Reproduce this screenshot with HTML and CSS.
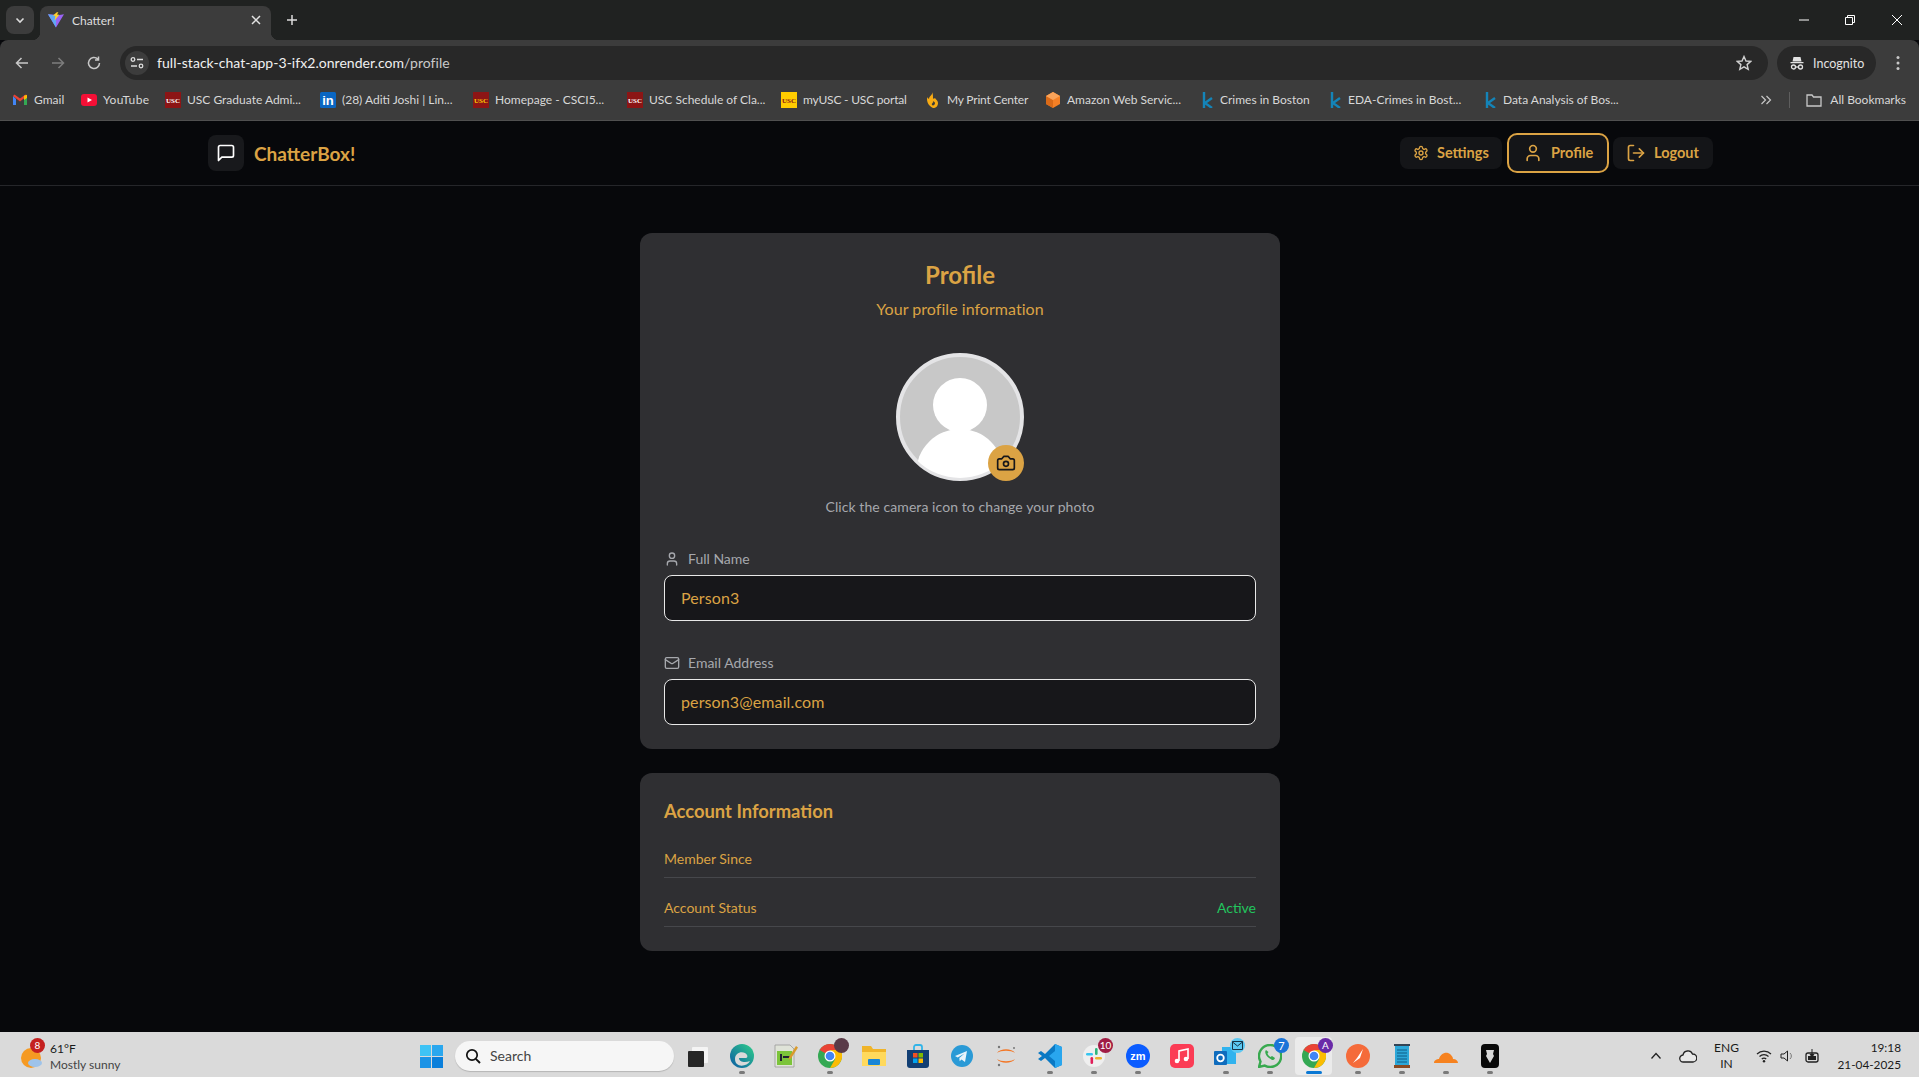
FILE: index.html
```html
<!DOCTYPE html>
<html lang="en">
<head>
<meta charset="utf-8">
<title>Chatter!</title>
<link rel="stylesheet" href="styles.css">
</head>
<body>
<header class="chrome">
  <div class="tabstrip">
    <button class="tab-list"><svg width="12" height="12" viewBox="0 0 12 12"><path d="M2.500 4.500 6 8l3.500-3.500" fill="none" stroke="#dcdcdc" stroke-width="1.600"/></svg></button>
    <div class="tab">
      <svg class="favicon" width="16" height="16" viewBox="0 0 16 16"><path d="M0 2.200 8 15.500 16 2.200 10 3.200 8 2.800z" fill="#9a63f5"/><path d="M0 2.200 8 3.600 8 15.500z" fill="#5fa8f5"/><path d="M8.800.3 5 3.500 7.400 4 6.600 8.600 11.300 2.800 9 2.600 10.400.3z" fill="#ffd02a"/></svg>
      <span class="tab-title">Chatter!</span>
      <svg class="tab-x" width="10" height="10" viewBox="0 0 10 10"><path d="M1 1l8 8M9 1 1 9" stroke="#e2e2e2" stroke-width="1.500"/></svg>
    </div>
    <svg class="tab-new" width="12" height="12" viewBox="0 0 12 12"><path d="M6 1v10M1 6h10" stroke="#dcdcdc" stroke-width="1.500"/></svg>
    <div class="win-ctrls">
      <svg width="10" height="10" viewBox="0 0 10 10"><path d="M0 5h10" stroke="#fff" stroke-width="1"/></svg>
      <svg width="10" height="10" viewBox="0 0 10 10"><path d="M.5 2.500h7v7h-7zM2.500 2.500v-2h7v7h-2" fill="none" stroke="#fff"/></svg>
      <svg width="12" height="12" viewBox="0 0 12 12"><path d="M1 1l10 10M11 1 1 11" stroke="#fff" stroke-width="1"/></svg>
    </div>
  </div>
  <div class="toolbar">
    <svg class="tb-ico" width="16" height="16" viewBox="0 0 16 16"><path d="M14 8H3M7.500 3 2.500 8l5 5" fill="none" stroke="#c8c8c8" stroke-width="1.500"/></svg>
    <svg class="tb-ico" width="16" height="16" viewBox="0 0 16 16"><path d="M2 8h11M8.500 3l5 5-5 5" fill="none" stroke="#7d7d7d" stroke-width="1.500"/></svg>
    <svg class="tb-ico" width="16" height="16" viewBox="0 0 16 16"><path d="M13.500 8A5.500 5.500 0 1 1 11.800 4M12.500 1.500V5H9" fill="none" stroke="#c8c8c8" stroke-width="1.500"/></svg>
    <div class="omnibox">
      <span class="site-btn"><svg width="16" height="16" viewBox="0 0 16 16"><g fill="none" stroke="#dcdcdc" stroke-width="1.300"><circle cx="4" cy="4.500" r="1.800"/><path d="M8 4.500h6M2 11h6"/><circle cx="12" cy="11" r="1.800"/></g></svg></span>
      <span class="url">full-stack-chat-app-3-ifx2.onrender.com<span class="url-path">/profile</span></span>
      <svg class="star" width="16" height="16" viewBox="0 0 16 16"><path d="M8 1.500 10 6l4.800.4-3.700 3.200 1.100 4.700L8 11.800l-4.200 2.500 1.100-4.700L1.200 6.400 6 6z" fill="none" stroke="#d0d0d0" stroke-width="1.400"/></svg>
    </div>
    <div class="incognito">
      <svg width="16" height="16" viewBox="0 0 16 16"><g fill="#e2e2e2"><path d="M4.500 2h7l1 4.500h-9zM1.500 7h13v1.300h-13z"/></g><g fill="none" stroke="#e2e2e2" stroke-width="1.300"><circle cx="4.500" cy="12" r="2"/><circle cx="11.500" cy="12" r="2"/><path d="M6.500 12h3"/></g></svg>
      <span>Incognito</span>
    </div>
    <svg class="kebab" width="4" height="16" viewBox="0 0 4 16"><g fill="#c8c8c8"><circle cx="2" cy="2.500" r="1.500"/><circle cx="2" cy="8" r="1.500"/><circle cx="2" cy="13.500" r="1.500"/></g></svg>
  </div>
  <nav class="bookmarks">
    <a class="bm bm-gmail"><svg width="16" height="16" viewBox="0 0 16 16"><path d="M1 4v9h3V7z" fill="#4285f4"/><path d="M15 4v9h-3V7z" fill="#34a853"/><path d="M1 4l7 5.500L15 4l-1.500-1.500L8 6.500 2.500 2.500z" fill="#ea4335"/><path d="M12 3.800 15 2.800V6l-3 2z" fill="#fbbc04"/></svg><span>Gmail</span></a>
    <a class="bm bm-yt"><svg width="16" height="16" viewBox="0 0 16 16"><rect y="2" width="16" height="12" rx="3" fill="#f50f36"/><path d="M6.500 5.500v5L11 8z" fill="#fff"/></svg><span>YouTube</span></a>
    <a class="bm bm-a"><svg width="16" height="16" viewBox="0 0 16 16"><rect width="16" height="16" fill="#8c1515"/><text class="fav-txt fav-w" x="8" y="11">USC</text></svg><span>USC Graduate Admi...</span></a>
    <a class="bm bm-in"><svg width="16" height="16" viewBox="0 0 16 16"><rect width="16" height="16" rx="1.500" fill="#0a66c2"/><text class="fav-in" x="8" y="13">in</text></svg><span>(28) Aditi Joshi | Lin...</span></a>
    <a class="bm bm-b"><svg width="16" height="16" viewBox="0 0 16 16"><rect width="16" height="16" fill="#8c1515"/><text class="fav-txt fav-y" x="8" y="11">USC</text></svg><span>Homepage - CSCI5...</span></a>
    <a class="bm bm-c"><svg width="16" height="16" viewBox="0 0 16 16"><rect width="16" height="16" fill="#8c1515"/><text class="fav-txt fav-w" x="8" y="11">USC</text></svg><span>USC Schedule of Cla...</span></a>
    <a class="bm bm-d"><svg width="16" height="16" viewBox="0 0 16 16"><rect width="16" height="16" fill="#ffcc00"/><text class="fav-txt fav-r" x="8" y="11">USC</text></svg><span>myUSC - USC portal</span></a>
    <a class="bm bm-e"><svg width="16" height="16" viewBox="0 0 16 16"><path d="M7 0c1 3-3 4-3 7-1-.5-1.500-1.500-1.500-2C1 8 3 14 8 16c3 0 5-2 5-5 0-2.500-2-3-3-5C9 7 8 7 8 6c0-2 0-4-1-6z" fill="#f7ab14"/><path d="M8 9c1 2-2 2-1 4 1 1 3 0 3-2 0-1-1-1-2-2z" fill="#3c3c3c"/></svg><span>My Print Center</span></a>
    <a class="bm bm-f"><svg width="16" height="16" viewBox="0 0 16 16"><path d="M8 0l7 4v8l-7 4-7-4V4z" fill="#f58025"/><path d="M8 8v8l-7-4V4z" fill="#d96a18"/><path d="M8 8 1 4l7-4 7 4z" fill="#f9a35a"/></svg><span>Amazon Web Servic...</span></a>
    <a class="bm bm-g"><svg width="12" height="16" viewBox="0 0 12 16"><path d="M2 0v16M10 6 3 11l7 5" fill="none" stroke="#1484b8" stroke-width="2.400"/></svg><span>Crimes in Boston</span></a>
    <a class="bm bm-h"><svg width="12" height="16" viewBox="0 0 12 16"><path d="M2 0v16M10 6 3 11l7 5" fill="none" stroke="#1484b8" stroke-width="2.400"/></svg><span>EDA-Crimes in Bost...</span></a>
    <a class="bm bm-i"><svg width="12" height="16" viewBox="0 0 12 16"><path d="M2 0v16M10 6 3 11l7 5" fill="none" stroke="#1484b8" stroke-width="2.400"/></svg><span>Data Analysis of Bos...</span></a>
    <div class="bm-end">
      <svg width="12" height="12" viewBox="0 0 12 12"><path d="M1.500 2 5.500 6l-4 4M6.500 2l4 4-4 4" fill="none" stroke="#c8c8c8" stroke-width="1.200"/></svg>
      <i class="bm-sep"></i>
      <a class="bm-all"><svg width="16" height="16" viewBox="0 0 16 16"><path d="M1 3h5l1.500 2H15v9H1z" fill="none" stroke="#c8c8c8" stroke-width="1.300"/></svg><span>All Bookmarks</span></a>
    </div>
  </nav>
</header>

<main class="app">
  <div class="app-nav">
    <div class="brand">
      <span class="brand-box"><svg class="lu lu-20" viewBox="0 0 24 24"><path d="M21 15a2 2 0 0 1-2 2H7l-4 4V5a2 2 0 0 1 2-2h14a2 2 0 0 1 2 2z"/></svg></span>
      <span class="brand-name">ChatterBox!</span>
    </div>
    <div class="nav-btns">
      <a class="nav-btn"><svg class="lu lu-16" viewBox="0 0 24 24"><path d="M12.220 2h-.44a2 2 0 0 0-2 2v.18a2 2 0 0 1-1 1.730l-.43.25a2 2 0 0 1-2 0l-.15-.08a2 2 0 0 0-2.730.73l-.22.38a2 2 0 0 0 .73 2.730l.15.1a2 2 0 0 1 1 1.720v.51a2 2 0 0 1-1 1.740l-.15.09a2 2 0 0 0-.73 2.730l.22.38a2 2 0 0 0 2.730.73l.15-.08a2 2 0 0 1 2 0l.43.25a2 2 0 0 1 1 1.730V20a2 2 0 0 0 2 2h.44a2 2 0 0 0 2-2v-.18a2 2 0 0 1 1-1.730l.43-.25a2 2 0 0 1 2 0l.15.08a2 2 0 0 0 2.730-.73l.22-.39a2 2 0 0 0-.73-2.730l-.15-.08a2 2 0 0 1-1-1.740v-.5a2 2 0 0 1 1-1.740l.15-.09a2 2 0 0 0 .73-2.730l-.22-.38a2 2 0 0 0-2.730-.73l-.15.08a2 2 0 0 1-2 0l-.43-.25a2 2 0 0 1-1-1.730V4a2 2 0 0 0-2-2z"/><circle cx="12" cy="12" r="3"/></svg><span>Settings</span></a>
      <a class="nav-btn nav-btn-on"><svg class="lu lu-20" viewBox="0 0 24 24"><path d="M19 21v-2a4 4 0 0 0-4-4H9a4 4 0 0 0-4 4v2"/><circle cx="12" cy="7" r="4"/></svg><span>Profile</span></a>
      <a class="nav-btn"><svg class="lu lu-20" viewBox="0 0 24 24"><path d="M9 21H5a2 2 0 0 1-2-2V5a2 2 0 0 1 2-2h4"/><polyline points="16 17 21 12 16 7"/><line x1="21" y1="12" x2="9" y2="12"/></svg><span>Logout</span></a>
    </div>
  </div>

  <div class="content">
    <section class="card card-profile">
      <div class="head">
        <h1>Profile</h1>
        <p>Your profile information</p>
      </div>
      <div class="avatar-wrap">
        <div class="avatar">
          <svg viewBox="0 0 128 128" width="128" height="128"><defs><clipPath id="av"><circle cx="64" cy="64" r="61"/></clipPath></defs><circle cx="64" cy="64" r="62" fill="#c8c8c8" stroke="#e4e4e6" stroke-width="4"/><g clip-path="url(#av)" fill="#fff"><ellipse cx="64" cy="52" rx="27" ry="27"/><circle cx="64" cy="120" r="44"/></g></svg>
          <span class="cam"><svg class="lu lu-20 lu-dark" viewBox="0 0 24 24"><path d="M14.500 4h-5L7 7H4a2 2 0 0 0-2 2v9a2 2 0 0 0 2 2h16a2 2 0 0 0 2-2V9a2 2 0 0 0-2-2h-3l-2.500-3z"/><circle cx="12" cy="13" r="3"/></svg></span>
        </div>
        <p class="hint">Click the camera icon to change your photo</p>
      </div>
      <div class="fields">
        <div class="field">
          <label><svg class="lu lu-16 lu-grey" viewBox="0 0 24 24"><path d="M19 21v-2a4 4 0 0 0-4-4H9a4 4 0 0 0-4 4v2"/><circle cx="12" cy="7" r="4"/></svg>Full Name</label>
          <div class="value">Person3</div>
        </div>
        <div class="field">
          <label><svg class="lu lu-16 lu-grey" viewBox="0 0 24 24"><rect x="2" y="4" width="20" height="16" rx="2"/><path d="M22 7l-8.970 5.700a1.940 1.940 0 0 1-2.060 0L2 7"/></svg>Email Address</label>
          <div class="value">person3@email.com</div>
        </div>
      </div>
    </section>

    <section class="card card-account">
      <h2>Account Information</h2>
      <div class="rows">
        <div class="row"><span>Member Since</span><span></span></div>
        <div class="row"><span>Account Status</span><span class="active">Active</span></div>
      </div>
    </section>
  </div>
</main>

<footer class="taskbar">
  <div class="weather">
    <span class="w-ico"><svg width="24" height="28" viewBox="0 0 24 28"><circle cx="11" cy="16" r="10" fill="#f59a23"/><ellipse cx="15" cy="21" rx="7" ry="4" fill="#9ec3ea"/></svg><b class="w-badge">8</b></span>
    <div class="w-txt"><span class="w-temp">61°F</span><span class="w-desc">Mostly sunny</span></div>
  </div>
  <div class="tb-center">
    <svg class="start" width="23" height="23" viewBox="0 0 23 23"><rect width="11" height="11" fill="#3ec3f5"/><rect x="12" width="11" height="11" fill="#2aa7ee"/><rect y="12" width="11" height="11" fill="#1b93e6"/><rect x="12" y="12" width="11" height="11" fill="#0a7fdb"/></svg>
    <div class="search"><svg width="16" height="16" viewBox="0 0 16 16"><circle cx="7" cy="7" r="5.200" fill="none" stroke="#111" stroke-width="1.700"/><path d="M10.800 10.800 15 15" stroke="#111" stroke-width="1.900"/></svg><span>Search</span></div>
    <div class="apps">
      <span class="app-i"><svg viewBox="0 0 24 24"><rect x="6" y="3" width="16" height="16" rx="1" fill="#f4f4f4"/><rect x="2" y="7" width="16" height="16" rx="1" fill="#262626"/></svg></span>
      <span class="app-i dot"><svg viewBox="0 0 24 24"><defs><linearGradient id="ed" x1="0" y1="1" x2="1" y2="0"><stop offset="0" stop-color="#0c59a4"/><stop offset="1" stop-color="#2fd08a"/></linearGradient></defs><circle cx="12" cy="12" r="12" fill="url(#ed)"/><path d="M5 15c0-6 6-8 10-6 3 1.500 3 5 1 5h-7c0 4 6 5 11 3-3 6-15 7-15-2z" fill="#d9d9d9"/></svg></span>
      <span class="app-i"><svg viewBox="0 0 24 24"><path d="M1 1h15l4 4v18H1z" fill="#dfe3d8" stroke="#999" stroke-width=".8"/><rect x="3" y="7" width="15" height="14" fill="#7cc43a"/><rect x="6" y="10" width="2" height="7" fill="#223"/><rect x="9" y="12" width="7" height="2" fill="#223"/><path d="M15 13 22 2l2 1.500-7 11-2.500 1z" fill="#d99a2b"/></svg></span>
      <span class="app-i dot"><svg viewBox="0 0 24 24"><circle cx="12" cy="12" r="12" fill="#34a853"/><path d="M12 12 1.600 6A12 12 0 0 1 22.400 6H12z" fill="#ea4335"/><path d="M12 24A12 12 0 0 0 22.400 6H12l5.200 9z" fill="#fbbc04"/><circle cx="12" cy="12" r="5.500" fill="#fff"/><circle cx="12" cy="12" r="4.300" fill="#4285f4"/></svg><b class="pic"></b></span>
      <span class="app-i"><svg viewBox="0 0 24 24"><path d="M0 2h9l2 3h13v17H0z" fill="#f0b429"/><path d="M0 8h24v14H0z" fill="#ffd95c"/><rect x="6" y="15" width="12" height="6" rx="1" fill="#1a86d6"/></svg></span>
      <span class="app-i"><svg viewBox="0 0 24 24"><path d="M8 6V3a2 2 0 0 1 2-2h4a2 2 0 0 1 2 2v3" fill="none" stroke="#32b4e8" stroke-width="1.800"/><path d="M1 6h22v15a3 3 0 0 1-3 3H4a3 3 0 0 1-3-3z" fill="#123f74"/><rect x="7" y="9" width="4.500" height="4.500" fill="#f25022"/><rect x="12.500" y="9" width="4.500" height="4.500" fill="#7fba00"/><rect x="7" y="14.500" width="4.500" height="4.500" fill="#00a4ef"/><rect x="12.500" y="14.500" width="4.500" height="4.500" fill="#ffb900"/></svg></span>
      <span class="app-i"><svg viewBox="0 0 24 24"><circle cx="12" cy="12" r="11" fill="#2a9ad6"/><path d="M5 12l12-5-2 11-3.500-2.500-1.800 1.800-.4-3.300 5.200-4.500-6.800 4z" fill="#e8f4fb"/></svg></span>
      <span class="app-i"><svg viewBox="0 0 24 24"><path d="M3 9c3-5 15-5 18 0-4-3-14-3-18 0zM3 15c3 5 15 5 18 0-4 3-14 3-18 0z" fill="#f37726"/><circle cx="5" cy="3" r="1.200" fill="#777"/><circle cx="20" cy="4" r="1" fill="#777"/><circle cx="5" cy="21" r="1.200" fill="#777"/></svg></span>
      <span class="app-i dot"><svg viewBox="0 0 24 24"><path d="M17 0 7 10 3 7 0 9l4 3-4 3 3 2 4-3 10 10 7-3V3z" fill="#0a79c4"/><path d="M17 0l7 3v18l-7 3V7l-6 5 6 5z" fill="#29a6ee"/></svg></span>
      <span class="app-i dot"><svg viewBox="0 0 24 24"><circle cx="12" cy="12" r="11" fill="#efefef"/><rect x="4" y="9" width="7" height="2.600" rx="1.300" fill="#36c5f0"/><rect x="13" y="4" width="2.600" height="7" rx="1.300" fill="#2eb67d"/><rect x="13" y="13" width="7" height="2.600" rx="1.300" fill="#ecb22e"/><rect x="8.500" y="13" width="2.600" height="7" rx="1.300" fill="#e01e5a"/></svg><b class="cnt cnt-red">10</b></span>
      <span class="app-i dot"><svg viewBox="0 0 24 24"><circle cx="12" cy="12" r="12" fill="#0b5cff"/><text class="zm" x="12" y="16">zm</text></svg></span>
      <span class="app-i"><svg viewBox="0 0 24 24"><rect width="24" height="24" rx="5" fill="#fb3c55"/><path d="M9 17V7l9-2v10" fill="none" stroke="#fff" stroke-width="1.600"/><circle cx="7" cy="17" r="2.300" fill="#fff"/><circle cx="16" cy="15" r="2.300" fill="#fff"/></svg></span>
      <span class="app-i dot"><svg viewBox="0 0 24 24"><path d="M8 3h14v17H8z" fill="#31b3ee"/><rect x="0" y="7" width="13" height="14" rx="1" fill="#0f6cbd"/><circle cx="6.500" cy="14" r="3.300" fill="none" stroke="#fff" stroke-width="1.800"/></svg><b class="cnt cnt-mail"><svg width="11" height="9" viewBox="0 0 11 9"><path d="M.5.500h10v8H.5zM.5 1l5 4 5-4" fill="none" stroke="#123" stroke-width=".9"/></svg></b></span>
      <span class="app-i dot"><svg viewBox="0 0 24 24"><path d="M12 1a11 11 0 0 0-9.500 16.500L1 23l5.700-1.500A11 11 0 1 0 12 1z" fill="none" stroke="#38a94f" stroke-width="2.400"/><path d="M8 6c-2 2 0 6 3 8s5 3 6 0l-3-2-1.500 1C11 12 10 11 9.500 9.500l1-1.500z" fill="#38a94f"/></svg><b class="cnt cnt-blue">7</b></span>
      <span class="app-i dot active-app"><svg viewBox="0 0 24 24"><circle cx="12" cy="12" r="12" fill="#34a853"/><path d="M12 12 1.600 6A12 12 0 0 1 22.400 6H12z" fill="#ea4335"/><path d="M12 24A12 12 0 0 0 22.400 6H12l5.200 9z" fill="#fbbc04"/><circle cx="12" cy="12" r="5.500" fill="#fff"/><circle cx="12" cy="12" r="4.300" fill="#4285f4"/></svg><b class="cnt cnt-purple">A</b></span>
      <span class="app-i dot"><svg viewBox="0 0 24 24"><circle cx="12" cy="12" r="12" fill="#f56b3a"/><path d="M7 19l4-5 6-9-3 9z" fill="#fff"/></svg></span>
      <span class="app-i dot"><svg viewBox="0 0 24 24"><rect x="5" y="2" width="14" height="19" fill="#2ca7d8"/><path d="M7 6h10M7 9h10M7 12h10M7 15h10M7 18h10" stroke="#0e5d86" stroke-width="1"/><rect x="4" y="0" width="16" height="2" fill="#345"/><rect x="4" y="21" width="16" height="3" fill="#8a4a22"/></svg></span>
      <span class="app-i dot"><svg viewBox="0 0 24 24"><path d="M0 19c0-3 3-4 5-4 1-4 5-7 9-6 3 1 5 4 5 6 3 0 5 2 5 4z" fill="#f6821f"/></svg></span>
      <span class="app-i dot"><svg viewBox="0 0 24 24"><rect x="3" y="0" width="18" height="24" rx="4" fill="#0a0a0a"/><path d="M8 6h8l-1 4 1 2-4 7-4-7 1-2z" fill="#d9d9d9"/></svg></span>
    </div>
  </div>
  <div class="tray">
    <svg width="12" height="12" viewBox="0 0 12 12"><path d="M1.500 8.500 6 3.500l4.500 5" fill="none" stroke="#222" stroke-width="1.300"/></svg>
    <svg class="tray-cloud" width="18" height="14" viewBox="0 0 18 14"><path d="M4.500 13a3.500 3.500 0 0 1-.5-7A5 5 0 0 1 13.500 5 4 4 0 0 1 14 13z" fill="#e8e8e8" stroke="#222" stroke-width="1.300"/></svg>
    <div class="lang"><span>ENG</span><span>IN</span></div>
    <div class="tray-group">
      <svg width="16" height="14" viewBox="0 0 16 14"><path d="M1 5a10 10 0 0 1 14 0M3.500 7.500a6.500 6.500 0 0 1 9 0M5.800 10a3 3 0 0 1 4.400 0" fill="none" stroke="#222" stroke-width="1.200"/><circle cx="8" cy="12.300" r="1.200" fill="#222"/></svg>
      <svg width="16" height="14" viewBox="0 0 16 14"><path d="M1 5h3l3.500-3v10L4 9H1z" fill="none" stroke="#222" stroke-width="1"/><path d="M10 4a4 4 0 0 1 0 6" fill="none" stroke="#777" stroke-width="1"/></svg>
      <svg width="16" height="16" viewBox="0 0 16 16"><rect x="2" y="5" width="12" height="9" rx="2" fill="none" stroke="#222" stroke-width="1.300"/><path d="M8 1v7M6 6l2 3 2-3" fill="#222" stroke="#222"/><rect x="4" y="8" width="8" height="4" fill="#222"/></svg>
    </div>
    <div class="clock"><span>19:18</span><span>21-04-2025</span></div>
  </div>
</footer>
</body>
</html>
```
FILE: styles.css
```css
* { box-sizing: border-box; }
html, body { margin: 0; height: 100%; }
body {
  width: 1919px;
  height: 1077px;
  display: flex;
  flex-direction: column;
  overflow: hidden;
  background: #07080b;
  font-family: "Lato", "Open Sans", sans-serif;
}
p, h1, h2 { margin: 0; }
svg { display: block; flex: none; }

/* browser chrome */
.chrome { flex: none; }
.tabstrip {
  height: 40px;
  background: #202221;
  display: flex;
  align-items: flex-start;
  padding-left: 6px;
}
.tab-list {
  width: 28px;
  height: 28px;
  margin-top: 6px;
  padding: 0;
  border: 0;
  border-radius: 8px;
  background: #3c3c3c;
  display: flex;
  align-items: center;
  justify-content: center;
}
.tab {
  position: relative;
  width: 231px;
  height: 34px;
  margin: 6px 0 0 6px;
  padding: 0 10px 6px 8px;
  border-radius: 8px 8px 0 0;
  background: #3c3c3c;
  display: flex;
  align-items: center;
  color: #dfdfdf;
  font-size: 12px;
}
.tab::before, .tab::after {
  content: "";
  position: absolute;
  bottom: 0;
  width: 8px;
  height: 8px;
}
.tab::before { left: -8px; background: radial-gradient(circle at 0 0, transparent 8px, #3c3c3c 8.5px); }
.tab::after { right: -8px; background: radial-gradient(circle at 100% 0, transparent 8px, #3c3c3c 8.5px); }
.tab-title { margin-left: 8px; flex: 1; font-size: 12px; }
.tab-new { margin: 14px 0 0 15px; }
.win-ctrls {
  margin-left: auto;
  display: flex;
  align-items: center;
  gap: 36px;
  height: 40px;
  padding-right: 16px;
}
.toolbar {
  height: 40px;
  background: #3c3c3c;
  border-radius: 8px 8px 0 0;
  display: flex;
  align-items: flex-start;
  padding: 6px 0 0 14px;
  color: #e2e2e2;
}
.tb-ico { margin: 9px 20px 0 0; }
.tb-ico:nth-child(3) { margin-right: 18px; }
.omnibox {
  width: 1648px;
  height: 34px;
  background: #282828;
  border-radius: 17px;
  display: flex;
  align-items: center;
  padding: 0 12px 0 5px;
}
.site-btn {
  width: 24px;
  height: 24px;
  border-radius: 50%;
  background: #3c3c3c;
  display: flex;
  align-items: center;
  justify-content: center;
}
.url {
  margin: 0 0 1px 8px;
  flex: 1;
  font-size: 14px;
  letter-spacing: .04px;
  color: #f0f0f0;
}
.url-path { color: #c9c9c9; }
.star { margin-right: 4px; }
.incognito {
  width: 99px;
  height: 34px;
  margin-left: 9px;
  border-radius: 17px;
  background: #282828;
  display: flex;
  align-items: center;
  gap: 8px;
  padding-left: 12px;
  font-size: 12.500px;
}
.kebab { margin: 9px 0 0 20px; }
.bookmarks {
  height: 41px;
  background: #3c3c3c;
  border-bottom: 1px solid #505050;
  display: flex;
  align-items: center;
  padding: 0 0 1px 12px;
  color: #d8d8d8;
  font-size: 12px;
}
.bm, .bm-all { display: flex; align-items: center; gap: 6px; white-space: nowrap; }
.bm-gmail { width: 69px; }
.bm-yt { width: 84px; }
.bm-yt span { letter-spacing: .35px; }
.bm-a { width: 155px; }
.bm-in { width: 153px; }
.bm-b { width: 154px; }
.bm-c { width: 154px; }
.bm-d { width: 144px; }
.bm-d span { letter-spacing: -.2px; }
.bm-e { width: 120px; }
.bm-e span { letter-spacing: -.2px; }
.bm-f { width: 157px; }
.bm-g { width: 128px; }
.bm-h { width: 155px; }
.bm-i { width: 140px; }
.bm-end { display: flex; align-items: center; margin-left: auto; padding-right: 13px; }
.bm-sep { width: 1px; height: 16px; background: #5e5e5e; margin: 0 16px 0 17px; }
.bm-all { gap: 8px; }

/* app */
.app { flex: 1; min-height: 0; display: flex; flex-direction: column; }
.app-nav {
  height: 65px;
  flex: none;
  border-bottom: 1px solid #25262a;
  display: flex;
  align-items: center;
  justify-content: space-between;
  padding: 0 206px 0 208px;
  color: #dba344;
}
.brand { display: flex; align-items: center; gap: 10px; }
.brand-box {
  width: 36px;
  height: 36px;
  border-radius: 8px;
  background: #18191c;
  display: flex;
  align-items: center;
  justify-content: center;
  color: #fff;
}
.brand-name { font-size: 19px; font-weight: 700; }
.lu { fill: none; stroke: currentColor; stroke-width: 2; stroke-linecap: round; stroke-linejoin: round; }
.lu-16 { width: 16px; height: 16px; }
.lu-20 { width: 20px; height: 20px; }
.lu-dark { color: #17171a; }
.lu-grey { color: #a6a8ad; }
.nav-btns { display: flex; align-items: center; gap: 4px; }
.nav-btn {
  height: 32px;
  padding: 0 10px 1px 13px;
  border-radius: 8px;
  background: #141518;
  display: flex;
  align-items: center;
  gap: 8px;
  font-size: 14.500px;
  font-weight: 700;
}
.nav-btn:nth-child(1) { width: 102px; margin-right: 1px; }
.nav-btn:nth-child(3) { width: 100px; }
.nav-btn-on {
  width: 102px;
  height: 40px;
  padding: 0 12px 1px 14px;
  border: 2px solid #dba344;
  border-radius: 10px;
}
.content {
  flex: 1;
  display: flex;
  flex-direction: column;
  align-items: center;
  gap: 24px;
  padding: 47px 0 0 1px;
}
.card { width: 640px; background: #2f2f32; border-radius: 12px; padding: 24px; color: #dba344; }
.card-profile { height: 516px; display: flex; flex-direction: column; }
.card-account { height: 178px; }
.head { text-align: center; }
h1 { font-size: 24px; font-weight: 700; line-height: 32px; margin-top: 2px; }
.head p { font-size: 16px; line-height: 24px; margin-top: 6px; letter-spacing: .04px; }
.avatar-wrap { display: flex; flex-direction: column; align-items: center; margin-top: 32px; }
.avatar { position: relative; width: 128px; height: 128px; }
.cam {
  position: absolute;
  right: 0;
  bottom: 0;
  width: 36px;
  height: 36px;
  border-radius: 50%;
  background: #dba344;
  display: flex;
  align-items: center;
  justify-content: center;
}
.hint { margin-top: 16px; font-size: 14px; line-height: 20px; letter-spacing: .08px; color: #a6a8ad; }
.fields { display: flex; flex-direction: column; gap: 32px; margin-top: 32px; }
.field label {
  display: flex;
  align-items: center;
  gap: 8px;
  height: 20px;
  padding-bottom: 1px;
  font-size: 14px;
  color: #a6a8ad;
}
.value {
  height: 46px;
  margin-top: 6px;
  padding: 0 16px 2px;
  border: 1px solid #e8e8e8;
  border-radius: 8px;
  background: #17171a;
  display: flex;
  align-items: center;
  font-size: 16px;
  letter-spacing: .12px;
}
h2 { font-size: 18.400px; line-height: 28px; font-weight: 700; }
.rows { margin-top: 16px; font-size: 14px; line-height: 20px; }
.row {
  height: 49px;
  padding-bottom: 8px;
  border-bottom: 1px solid #46474b;
  display: flex;
  align-items: flex-end;
  justify-content: space-between;
}
.row:first-child { height: 37px; }
.active { color: #22c55e; }

/* taskbar */
.taskbar {
  flex: none;
  height: 45px;
  padding-top: 3px;
  background: #dadada;
  display: flex;
  align-items: center;
  color: #1a1a1a;
  font-size: 12px;
}
.weather { width: 420px; display: flex; align-items: center; padding-left: 20px; gap: 8px; }
.w-ico { position: relative; display: block; width: 22px; height: 28px; }
.w-badge {
  position: absolute;
  top: -4px;
  left: 10px;
  width: 15px;
  height: 15px;
  border-radius: 50%;
  background: #c42020;
  color: #fff;
  font-size: 10px;
  font-weight: 400;
  line-height: 15px;
  text-align: center;
}
.w-txt { display: flex; flex-direction: column; gap: 1px; font-size: 12px; line-height: 15px; }
.w-desc { color: #444; }
.tb-center { display: flex; align-items: center; }
.start { margin-right: 12px; }
.search {
  width: 219px;
  height: 30px;
  border-radius: 15px;
  background: #f6f6f6;
  box-shadow: 0 1px 1px #b5b5b5;
  display: flex;
  align-items: center;
  gap: 9px;
  padding: 0 0 1px 10px;
  font-size: 14px;
  color: #444;
}
.apps { display: flex; gap: 20px; margin-left: 12px; }
.app-i { position: relative; display: block; width: 24px; height: 24px; }
.app-i svg { width: 24px; height: 24px; }
.app-i.dot::after {
  content: "";
  position: absolute;
  left: 9px;
  bottom: -6px;
  width: 6px;
  height: 3px;
  border-radius: 2px;
  background: #7a7a7a;
}
.active-app::before {
  content: "";
  position: absolute;
  inset: -7px -6px -7px -7px;
  border-radius: 4px;
  background: #ebebeb;
}
.active-app svg { position: relative; }
.app-i.active-app::after { left: 4px; width: 16px; background: #0a78d4; }
.pic, .cnt {
  position: absolute;
  top: -6px;
  right: -7px;
  width: 15px;
  height: 15px;
  border-radius: 50%;
}
.pic { background: #5a3a48; }
.cnt {
  color: #fff;
  font-size: 10px;
  font-weight: 400;
  line-height: 15px;
  text-align: center;
  display: flex;
  align-items: center;
  justify-content: center;
}
.cnt svg { width: 11px; height: 9px; }
.cnt-red { background: #a01b44; }
.cnt-mail { background: #5cc8f2; }
.cnt-blue { background: #1a74d8; font-size: 11px; }
.cnt-purple { background: #6a2aa8; }
.tray { margin-left: auto; padding-right: 18px; display: flex; align-items: center; }
.tray-cloud { margin: 0 14px 0 17px; }
.lang { display: flex; flex-direction: column; align-items: center; gap: 2px; width: 30px; line-height: 14px; font-size: 12px; }
.tray-group { display: flex; align-items: center; gap: 8px; margin: 0 17px 0 15px; }
.clock { display: flex; flex-direction: column; align-items: flex-end; gap: 2px; line-height: 15px; font-size: 11.800px; }
.fav-txt { font: 700 7px "Liberation Serif", serif; text-anchor: middle; }
.fav-w { fill: #fff; }
.fav-y { fill: #ffcc00; }
.fav-r { fill: #8c1515; }
.fav-in { font: 700 13px "Liberation Sans", sans-serif; fill: #fff; text-anchor: middle; }
.zm { font: 700 11px "Liberation Sans", sans-serif; fill: #fff; text-anchor: middle; }
```
